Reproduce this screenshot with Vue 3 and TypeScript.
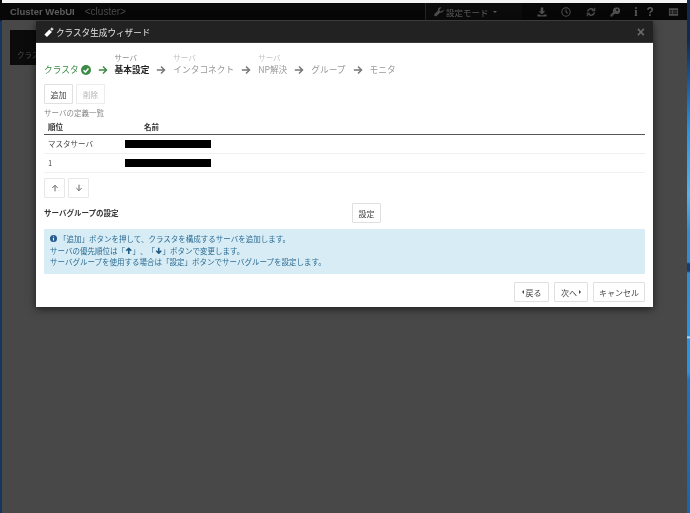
<script setup lang="ts">
interface Step { top?: string; name: string; state: 'done' | 'current' | 'todo'; arrow: boolean }
const steps: Step[] = [
  { name: 'クラスタ', state: 'done', arrow: true },
  { top: 'サーバ', name: '基本設定', state: 'current', arrow: true },
  { top: 'サーバ', name: 'インタコネクト', state: 'todo', arrow: true },
  { top: 'サーバ', name: 'NP解決', state: 'todo', arrow: true },
  { name: 'グループ', state: 'todo', arrow: true },
  { name: 'モニタ', state: 'todo', arrow: false },
]
const rows = ['マスタサーバ', '1']
</script>

<template>
  <div class="page">
    <div class="strip-left"></div>
    <div class="screen">
      <div class="topstrip"></div>
      <header class="navbar">
        <span class="brand">Cluster WebUI</span>
        <span class="cluster">&lt;cluster&gt;</span>
        <div class="mode">
          <svg class="nav-ico" viewBox="0 0 24 24"><path d="M23 6l-5 5-4-1-1-4 5-5C14 0 8.500 3 9.500 8.500L1.500 17c-1.500 1.500-1 3.500 0 4.500s3 1.500 4.500 0l8.500-8c5.500 1 9.500-3.500 8.500-7.500z" fill="currentColor"/></svg>
          <span>設定モード</span>
          <span class="caret"></span>
        </div>
        <div class="tools">
          <svg class="nav-ico" viewBox="0 0 24 24"><path d="M9 1h6v9h5l-8 8-8-8h5zM1 18h6l2 2h6l2-2h6v5H1z" fill="currentColor"/></svg>
          <svg class="nav-ico" viewBox="0 0 24 24" fill="none" stroke="currentColor" stroke-width="2.500"><circle cx="12" cy="12" r="10"/><path d="M12 6v6l4 3"/></svg>
          <svg class="nav-ico" viewBox="0 0 24 24" fill="none" stroke="currentColor" stroke-width="3.500"><path d="M4 11a8 8 0 0 1 14-4M20 13a8 8 0 0 1-14 4"/><path d="M21 2v7h-7M3 22v-7h7" stroke-width="2.500"/></svg>
          <svg class="nav-ico" viewBox="0 0 24 24"><path d="M15 1a8 8 0 0 0-7.500 11L1 19v4h5v-3h3v-3h3l1-1A8 8 0 1 0 15 1zm2 3.500a2.500 2.500 0 1 1 0 5 2.500 2.500 0 0 1 0-5z" fill="currentColor"/></svg>
          <span class="glyph info">i</span>
          <span class="glyph help">?</span>
          <svg class="nav-ico wide" viewBox="0 0 24 24"><path d="M1 3h22v18H1zM3 8v3h6V8zm8 0v3h10V8zM3 13v3h6v-3zm8 0v3h10v-3z" fill="currentColor" fill-rule="evenodd"/></svg>
        </div>
      </header>

      <main class="backdrop">
        <div class="bg-card"><span>クラス</span></div>
      </main>
    </div>
    <div class="strip-right"></div>

    <section class="modal">
      <div class="modal-head">
        <svg class="wand" viewBox="0 0 24 24"><path d="M1 18L13 6l6 6L7 24zM19 0l1.500 3.500L24 5l-3.500 1.500L19 10l-1.500-3.500L14 5l3.500-1.500z" fill="#fff"/></svg>
        <span class="title">クラスタ生成ウィザード</span>
        <span class="close">×</span>
      </div>

      <div class="modal-body">
        <ol class="stepper">
          <template v-for="s in steps" :key="s.name">
            <li class="step" :class="s.state">
              <small>{{ s.top }}</small>
              <span class="step-name">
                {{ s.name }}
                <svg v-if="s.state === 'done'" class="check" viewBox="0 0 24 24">
                  <circle cx="12" cy="12" r="12" fill="#3c8a45"/>
                  <path d="M6 12.500l4.500 4.500L18 8.500" fill="none" stroke="#fff" stroke-width="3.500"/>
                </svg>
              </span>
            </li>
            <li v-if="s.arrow" class="arrow" :class="{ green: s.state === 'done' }">
              <svg viewBox="0 0 24 24"><path d="M2 12h18M12 3.500l8.500 8.500-8.500 8.500" fill="none" stroke="currentColor" stroke-width="3.500"/></svg>
            </li>
          </template>
        </ol>

        <div class="btn-row">
          <button class="btn">追加</button>
          <button class="btn disabled">削除</button>
        </div>

        <div class="caption">サーバの定義一覧</div>
        <div class="thead"><span>順位</span><span>名前</span></div>
        <div v-for="r in rows" :key="r" class="trow">
          <span>{{ r }}</span>
          <span class="redact"></span>
        </div>

        <div class="btn-row arrows">
          <button class="btn sq"><svg viewBox="0 0 24 24"><path d="M12 22V4M4 12l8-8 8 8" fill="none" stroke="currentColor" stroke-width="3"/></svg></button>
          <button class="btn sq"><svg viewBox="0 0 24 24"><path d="M12 2v18M4 12l8 8 8-8" fill="none" stroke="currentColor" stroke-width="3"/></svg></button>
        </div>

        <div class="group-row">
          <strong>サーバグループの設定</strong>
          <button class="btn">設定</button>
        </div>

        <div class="alert">
          <p><svg class="info-ico" viewBox="0 0 24 24"><circle cx="12" cy="12" r="12" fill="#245a8d"/><path d="M12 5v3M12 10.500V19" stroke="#fff" stroke-width="4" fill="none"/></svg>「追加」ボタンを押して、クラスタを構成するサーバを追加します。</p>
          <p>サーバの優先順位は「<svg class="inline-arrow" viewBox="0 0 24 24"><path d="M12 22V4M4 12l8-8 8 8" fill="none" stroke="currentColor" stroke-width="5"/></svg>」、「<svg class="inline-arrow" viewBox="0 0 24 24"><path d="M12 2v18M4 12l8 8 8-8" fill="none" stroke="currentColor" stroke-width="5"/></svg>」ボタンで変更します。</p>
          <p>サーバグループを使用する場合は「設定」ボタンでサーバグループを設定します。</p>
        </div>

        <div class="footer">
          <button class="btn back-btn"><span class="tri left"></span>戻る</button>
          <button class="btn next-btn">次へ<span class="tri right"></span></button>
          <button class="btn">キャンセル</button>
        </div>
      </div>
    </section>
  </div>
</template>

<style>
html, body { margin: 0; background: #484848; }
</style>

<style scoped>
.page {
  position: relative;
  width: 690px;
  height: 513px;
  overflow: hidden;
  display: flex;
  background: #484848;
  font-family: "Noto Sans CJK JP", "Liberation Sans", sans-serif;
  text-spacing-trim: space-all;
  filter: blur(.4px);
}
.strip-left { flex: none; width: 2px; background: linear-gradient(#070707 0, #070707 20px, #14355c 21px, #14355c 100%); }
.strip-right {
  flex: none;
  width: 3px;
  background: linear-gradient(#0d2a50 0, #0d2a50 40px, #1565b0 90px, #2196e8 130px, #4db5f0 195px, #2a8fd8 232px, #2a8fd8 262px, #0d3f78 264px, #0d3f78 271px, #2a8fd8 273px, #2196e8 336px, #dbeefc 337px, #2196e8 339px, #2196e8 372px, #1a74c4 380px, #1565b0 513px);
}
.screen { flex: 1; min-width: 0; display: flex; flex-direction: column; }
.topstrip { height: 3px; background: #f4f4f4; flex: none; }
.navbar {
  flex: none;
  height: 17px;
  background: #070707;
  color: #5c5c5c;
  display: flex;
  align-items: center;
  padding-left: 8px;
  font-size: 8.500px;
}
.brand { font-family: "Liberation Sans", sans-serif; font-weight: 700; font-size: 9.500px; color: #5e5e5e; }
.cluster { margin-left: 10px; font-family: "Liberation Sans", sans-serif; font-size: 10px; color: #4a4a4a; }
.mode {
  margin-left: 299px;
  width: 97px;
  height: 100%;
  border-left: 1px solid #0e2a40;
  background: #0b0b0b;
  padding-left: 8px;
  display: flex;
  align-items: center;
  gap: 2px;
  color: #5c5c5c;
  box-sizing: border-box;
}
.caret { margin-left: 3px; border: 2px solid transparent; border-top-color: #5c5c5c; border-bottom: 0; }
.tools {
  margin-left: 15px;
  display: flex;
  align-items: center;
  gap: 14.500px;
}
.nav-ico { width: 10px; height: 10px; display: block; color: #4f4f4f; }
.nav-ico.wide { width: 11px; margin-left: 1px; }
.glyph { width: 6px; text-align: center; font-weight: 700; font-size: 12px; color: #585858; line-height: 10px; }
.glyph.info { margin-left: -2px; margin-right: -7px; font-family: "Liberation Serif", serif; }
.glyph.help { font-family: "Liberation Sans", sans-serif; }

.backdrop { flex: 1; background: #484848; padding: 10px 0 0 8px; }
.bg-card {
  width: 40px;
  height: 35px;
  background: #0b0b0b;
  color: #4b4b4b;
  font-size: 7.500px;
  box-sizing: border-box;
  padding: 20px 0 0 7px;
  line-height: 10px;
}

.modal {
  position: absolute;
  left: 36px;
  top: 21px;
  width: 617px;
  height: 286px;
  background: #fff;
  box-shadow: 0 2px 8px rgba(0, 0, 0, .6);
  display: flex;
  flex-direction: column;
}
.modal-head {
  flex: none;
  height: 22px;
  background: #222;
  display: flex;
  align-items: center;
  padding: 0 8px;
  color: #e4e4e4;
  font-size: 8.600px;
  border-bottom: 1px solid #3a3a3a;
  box-sizing: border-box;
}
.wand { width: 10px; height: 10px; margin-right: 2px; }
.title { flex: 1; }
.close { color: #6c6c6c; font-size: 14px; font-family: "Liberation Sans", sans-serif; font-weight: 700; line-height: 12px; }

.modal-body { flex: 1; padding: 0 8px; display: flex; flex-direction: column; color: #333; font-size: 7.500px; line-height: 10px; }
.modal-body button { font-family: inherit; }

.stepper {
  list-style: none;
  margin: 0;
  padding: 10px 0 0;
  display: flex;
  align-items: flex-end;
  gap: 7px;
  height: 24px;
  font-size: 8.700px;
  color: #999;
}
.step { display: flex; flex-direction: column; }
.step small { font-size: 7.500px; line-height: 10px; height: 10px; color: #c2c2c2; }
.step.current small { color: #8a8a8a; }
.step-name { display: flex; align-items: center; gap: 2px; line-height: 14px; height: 14px; white-space: nowrap; }
.step.done .step-name { color: #3c8a45; }
.step.current .step-name { color: #222; font-weight: 700; }
.check { width: 10px; height: 10px; }
.arrow { width: 10px; height: 14px; display: flex; align-items: center; color: #777; }
.arrow.green { color: #3c8a45; }
.arrow svg { width: 10px; height: 10px; }

.btn-row { display: flex; gap: 3px; margin-top: 7px; }
.btn {
  height: 20px;
  min-width: 29px;
  padding: 0 5px;
  background: #fff;
  border: 1px solid #e0e0e0;
  border-radius: 1px;
  color: #444;
  font-size: 8px;
  display: inline-flex;
  align-items: center;
  justify-content: center;
  box-sizing: border-box;
  white-space: nowrap;
}
.btn.disabled { color: #b4b4b4; border-color: #ececec; font-size: 7.500px; }
.btn.sq { width: 21px; min-width: 21px; padding: 0; color: #666; border-color: #e8e8e8; }
.btn.sq svg { width: 8px; height: 8px; }
.back-btn { padding: 0 6.500px; }
.next-btn { padding: 0 6px; }

.caption { margin-top: 4px; height: 10px; color: #888; }
.thead {
  display: grid;
  grid-template-columns: 96px 1fr;
  margin-top: 2px;
  height: 14px;
  padding-left: 4px;
  align-items: center;
  font-weight: 700;
  border-bottom: 1px solid #555;
  color: #333;
}
.trow {
  display: grid;
  grid-template-columns: 77px 1fr;
  padding-left: 4px;
  height: 18px;
  align-items: center;
  border-bottom: 1px solid #f0f0f0;
  color: #444;
  box-sizing: content-box;
}
.trow:last-of-type { border-bottom: 0; }
.redact { width: 86px; height: 8px; background: #000; display: block; }

.arrows { margin-top: 5px; }

.group-row {
  margin-top: 5px;
  height: 20px;
  display: flex;
  align-items: center;
  gap: 0;
}
.group-row strong { width: 308px; color: #333; }

.alert {
  margin-top: 6px;
  height: 45px;
  box-sizing: border-box;
  padding: 4px 6px;
  background: #d7ecf5;
  border-radius: 1px;
  color: #2c6b93;
  line-height: 11.500px;
}
.alert p { margin: 0; display: flex; align-items: center; white-space: nowrap; }
.info-ico { width: 7px; height: 7px; margin-right: 2px; }
.inline-arrow { width: 7.500px; height: 7.500px; color: #1f5a80; }

.footer { margin-top: 8px; display: flex; justify-content: flex-end; gap: 5px; }
.tri { width: 0; height: 0; border: 2px solid transparent; }
.tri.left { border-right-color: #444; border-left: 0; margin-right: 2px; }
.tri.right { border-left-color: #444; border-right: 0; margin-left: 2px; }
</style>
